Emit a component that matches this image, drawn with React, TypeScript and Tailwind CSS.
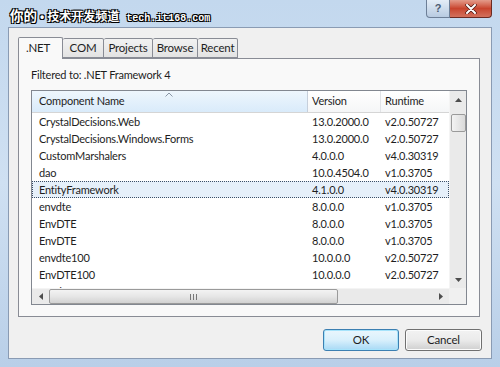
import { useState } from "react"

const rows = [
  { name: "CrystalDecisions.Web", version: "13.0.2000.0", runtime: "v2.0.50727" },
  { name: "CrystalDecisions.Windows.Forms", version: "13.0.2000.0", runtime: "v2.0.50727" },
  { name: "CustomMarshalers", version: "4.0.0.0", runtime: "v4.0.30319" },
  { name: "dao", version: "10.0.4504.0", runtime: "v1.0.3705" },
  { name: "EntityFramework", version: "4.1.0.0", runtime: "v4.0.30319" },
  { name: "envdte", version: "8.0.0.0", runtime: "v1.0.3705" },
  { name: "EnvDTE", version: "8.0.0.0", runtime: "v1.0.3705" },
  { name: "EnvDTE", version: "8.0.0.0", runtime: "v1.0.3705" },
  { name: "envdte100", version: "10.0.0.0", runtime: "v2.0.50727" },
  { name: "EnvDTE100", version: "10.0.0.0", runtime: "v2.0.50727" },
  { name: "envdte80", version: "8.0.0.0", runtime: "v1.0.3705" },
]

const tabs = [
  { label: ".NET", w: "w-[45px]" },
  { label: "COM", w: "w-[41px]" },
  { label: "Projects", w: "w-[49px]" },
  { label: "Browse", w: "w-[45px]" },
  { label: "Recent", w: "w-[40px]" },
]

const font = "font-['Lato','Noto_Sans',sans-serif]"

const App = () => {
  const [selected, setSelected] = useState(4)

  return (
    <div className="w-[500px] h-[367px] overflow-hidden bg-gradient-to-b from-[#c3d8ee] via-[#cfe0f2] to-[#b9cfe8] flex flex-col">
      {/* Title bar */}
      <div className="h-[27px] flex items-start relative">
        <div className="pl-[10px] pt-[5px] flex items-baseline text-white font-bold [text-shadow:0_0_1px_#000,1px_1px_0_#000,-1px_-1px_0_#000,1px_-1px_0_#000,-1px_1px_0_#000]">
          <span className="text-[13.5px] font-['Noto_Sans_CJK_SC',sans-serif]">你的</span>
          <span className="text-[12px] mx-[3px] font-['Liberation_Sans',sans-serif]">•</span>
          <span className="text-[12px] font-['Noto_Sans_CJK_SC',sans-serif]">技术开发频道</span>
          <span className="ml-[7px] text-[10px] font-['Liberation_Mono',monospace]">tech.it168.com</span>
        </div>
        <div className="ml-auto mr-[8px] flex">
          <div className="w-[24px] h-[18px] border border-[#6d7f97] border-t-0 rounded-bl-[4px] bg-gradient-to-b from-[#e4edf7] to-[#b8cbe1] flex items-center justify-center text-[11px] font-bold text-[#4b5c72] font-['Liberation_Sans',sans-serif]">
            ?
          </div>
          <div className="w-[42px] h-[18px] border border-[#6b2a22] border-t-0 border-l-0 rounded-br-[4px] bg-gradient-to-b from-[#e39b8b] via-[#c8442e] to-[#d2705c] flex items-center justify-center">
            <svg width="12" height="10" viewBox="0 0 12 10">
              <path d="M2 1 L10 9 M10 1 L2 9" stroke="#4a1510" strokeWidth="3.4" strokeLinecap="round" />
              <path d="M2 1 L10 9 M10 1 L2 9" stroke="#fff" strokeWidth="2" strokeLinecap="round" />
            </svg>
          </div>
        </div>
      </div>

      {/* Client area */}
      <div className={`mx-[8px] h-[332px] bg-[#f0f0f0] border border-[#8a9bb3] flex flex-col ${font} text-[11px] tracking-[-0.2px] text-[#1e1e1e]`}>
        {/* Tabs */}
        <div className="pl-[9px] pt-[8px] flex items-end h-[30px]">
          {tabs.map((t, i) =>
            i === 0 ? (
              <div
                key={t.label}
                className={`${t.w} h-[22px] -mb-px z-10 bg-[#f9f9f9] border border-[#898c95] border-b-0 rounded-t-[2px] pl-[7px] pt-[1px] leading-[18px] text-[11.5px]`}
              >
                {t.label}
              </div>
            ) : (
              <div
                key={t.label}
                className={`${t.w} h-[20px] bg-gradient-to-b from-[#f2f2f2] to-[#e3e3e3] border border-[#898c95] border-l-0 rounded-t-[2px] flex items-center justify-center leading-[18px] text-[11.5px]`}
              >
                {t.label}
              </div>
            )
          )}
        </div>

        {/* Tab panel */}
        <div className="ml-[9px] mr-[11px] h-[259px] bg-[#f9f9f9] border border-[#898c95] px-[12px] flex flex-col">
          <div className="h-[31px] flex items-center pt-[1px]">Filtered to: .NET Framework 4</div>
          <div className="h-[215px] bg-white border border-[#828790] flex">
            <div className="flex-1 flex flex-col min-w-0">
              {/* Header */}
              <div className="h-[22px] flex border-b border-[#d5d5d5] shrink-0">
                <div className="w-[276px] relative bg-gradient-to-b from-[#eef6fd] to-[#d9ebfa] border-r border-[#c6cfdb] flex items-center pl-[7px]">
                  Component Name
                  <svg className="absolute left-[133px] top-[1px]" width="8" height="5" viewBox="0 0 8 5">
                    <path d="M0.5 4.5 L4 1 L7.5 4.5" fill="none" stroke="#8a96a6" strokeWidth="1" />
                  </svg>
                </div>
                <div className="w-[73px] bg-gradient-to-b from-white to-[#f5f6f7] border-r border-[#e1e3e6] flex items-center pl-[4px]">
                  Version
                </div>
                <div className="flex-1 bg-gradient-to-b from-white to-[#f5f6f7] flex items-center pl-[4px]">Runtime</div>
              </div>
              {/* Rows */}
              <div className="flex-1 overflow-hidden">
                {rows.map((r, i) => (
                  <div
                    key={i}
                    onClick={() => setSelected(i)}
                    className={`h-[17px] flex items-center leading-[17px] ${
                      selected === i ? "bg-[#e6f0fa] outline outline-1 outline-dotted outline-[#3d4f66] -outline-offset-1" : ""
                    }`}
                  >
                    <div className="w-[276px] pl-[7px] truncate">{r.name}</div>
                    <div className="w-[73px] pl-[4px]">{r.version}</div>
                    <div className="flex-1 pl-[4px]">{r.runtime}</div>
                  </div>
                ))}
              </div>
              {/* Horizontal scrollbar */}
              <div className="h-[16px] shrink-0 bg-[#eaeaea] border-t border-[#f4f4f4] flex items-center">
                <div className="w-[17px] flex justify-center">
                  <svg width="4" height="7" viewBox="0 0 4 7">
                    <path d="M4 0 L0 3.5 L4 7 Z" fill="#4d4d4d" />
                  </svg>
                </div>
                <div className="w-[289px] h-[15px] rounded-[2px] border border-[#9a9a9a] bg-gradient-to-b from-[#f3f3f3] via-[#e6e6e6] to-[#d2d2d2] flex items-center justify-center gap-[2px]">
                  <span className="w-px h-[6px] bg-[#777]" />
                  <span className="w-px h-[6px] bg-[#777]" />
                  <span className="w-px h-[6px] bg-[#777]" />
                </div>
                <div className="flex-1" />
                <div className="w-[17px] flex justify-center">
                  <svg width="4" height="7" viewBox="0 0 4 7">
                    <path d="M0 0 L4 3.5 L0 7 Z" fill="#4d4d4d" />
                  </svg>
                </div>
              </div>
            </div>
            {/* Vertical scrollbar */}
            <div className="w-[17px] flex flex-col">
              <div className="flex-1 bg-[#eaeaea] border-l border-[#f4f4f4] flex flex-col items-center">
                <div className="h-[17px] flex items-center">
                  <svg width="7" height="4" viewBox="0 0 7 4">
                    <path d="M0 4 L3.5 0 L7 4 Z" fill="#4d4d4d" />
                  </svg>
                </div>
                <div className="mt-[6px] w-[15px] h-[18px] rounded-[2px] border border-[#9a9a9a] bg-gradient-to-r from-[#f3f3f3] to-[#dadada]" />
                <div className="flex-1" />
                <div className="h-[17px] flex items-center">
                  <svg width="7" height="4" viewBox="0 0 7 4">
                    <path d="M0 0 L3.5 4 L7 0 Z" fill="#4d4d4d" />
                  </svg>
                </div>
              </div>
              <div className="h-[16px] bg-[#f0f0f0]" />
            </div>
          </div>
        </div>

        {/* Buttons */}
        <div className="flex justify-end gap-[6px] mr-[9px] mt-[12px] text-[11.5px]">
          <button className="w-[76px] h-[22px] rounded-[3px] border border-[#3c7fb1] bg-gradient-to-b from-[#eaf6fd] via-[#d9f0fc] to-[#a7d9f5] shadow-[inset_0_0_0_1px_#a6e3fb]">
            OK
          </button>
          <button className="w-[77px] h-[22px] rounded-[3px] border border-[#707070] bg-gradient-to-b from-[#f2f2f2] via-[#ebebeb] to-[#cfcfcf] shadow-[inset_0_0_0_1px_#fcfcfc]">
            Cancel
          </button>
        </div>
      </div>
    </div>
  )
}

export default App
